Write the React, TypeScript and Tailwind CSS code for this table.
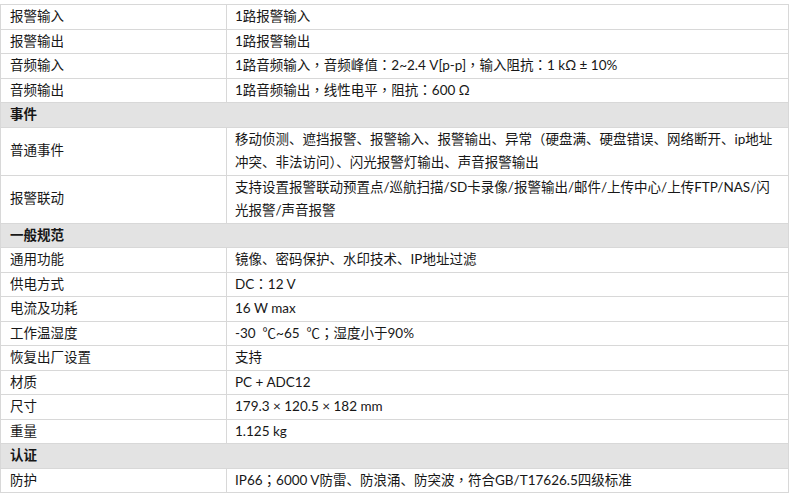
import React from 'react';

type Row =
  | { kind: 'section'; title: string }
  | { kind: 'item'; label: string; lines: string[] };

const rows: Row[] = [
  { kind: 'item', label: '报警输入', lines: ['1路报警输入'] },
  { kind: 'item', label: '报警输出', lines: ['1路报警输出'] },
  { kind: 'item', label: '音频输入', lines: ['1路音频输入，音频峰值：2~2.4 V[p-p]，输入阻抗：1 kΩ ± 10%'] },
  { kind: 'item', label: '音频输出', lines: ['1路音频输出，线性电平，阻抗：600 Ω'] },
  { kind: 'section', title: '事件' },
  {
    kind: 'item',
    label: '普通事件',
    lines: [
      '移动侦测、遮挡报警、报警输入、报警输出、异常（硬盘满、硬盘错误、网络断开、ip地址',
      '冲突、非法访问）、闪光报警灯输出、声音报警输出',
    ],
  },
  {
    kind: 'item',
    label: '报警联动',
    lines: ['支持设置报警联动预置点/巡航扫描/SD卡录像/报警输出/邮件/上传中心/上传FTP/NAS/闪', '光报警/声音报警'],
  },
  { kind: 'section', title: '一般规范' },
  { kind: 'item', label: '通用功能', lines: ['镜像、密码保护、水印技术、IP地址过滤'] },
  { kind: 'item', label: '供电方式', lines: ['DC：12 V'] },
  { kind: 'item', label: '电流及功耗', lines: ['16 W max'] },
  { kind: 'item', label: '工作温湿度', lines: ['-30  ℃~65  ℃；湿度小于90%'] },
  { kind: 'item', label: '恢复出厂设置', lines: ['支持'] },
  { kind: 'item', label: '材质', lines: ['PC + ADC12'] },
  { kind: 'item', label: '尺寸', lines: ['179.3 × 120.5 × 182 mm'] },
  { kind: 'item', label: '重量', lines: ['1.125 kg'] },
  { kind: 'section', title: '认证' },
  { kind: 'item', label: '防护', lines: ['IP66；6000 V防雷、防浪涌、防突波，符合GB/T17626.5四级标准'] },
];

// full-width ，：；（） sit centred in the reference, like the TC font draws them
function Text({ value }: { value: string }) {
  const parts = value.split(/([，：；（）])/);
  return (
    <>
      {parts.map((p, i) =>
        /^[，：；（）]$/.test(p) ? (
          <span key={i} className="leading-none" style={{ fontFamily: '"Noto Sans CJK TC", sans-serif' }}>
            {p}
          </span>
        ) : (
          <React.Fragment key={i}>{p}</React.Fragment>
        )
      )}
    </>
  );
}

export default function App() {
  return (
    <div className="w-[790px] h-[499px] bg-white pt-[4px] overflow-hidden">
      <table
        className="w-[789px] border-collapse text-[13.5px] leading-[23.5px] text-[#171717]"
        style={{ fontFamily: 'Lato, "Noto Sans CJK SC", sans-serif' }}
      >
        <colgroup>
          <col className="w-[226px]" />
          <col />
        </colgroup>
        <tbody>
          {rows.map((row, i) =>
            row.kind === 'section' ? (
              <tr key={i} className="bg-[#e3e3e3]">
                <td colSpan={2} className="border border-[#d8d8d8] px-[9px] font-bold">
                  {row.title}
                </td>
              </tr>
            ) : (
              <tr key={i}>
                <td className="border border-[#d8d8d8] px-[9px] align-middle">{row.label}</td>
                <td className="border border-[#d8d8d8] px-[8px] align-middle">
                  {row.lines.map((line, j) => (
                    <div key={j} className="whitespace-pre">
                      <Text value={line} />
                    </div>
                  ))}
                </td>
              </tr>
            )
          )}
        </tbody>
      </table>
    </div>
  );
}
